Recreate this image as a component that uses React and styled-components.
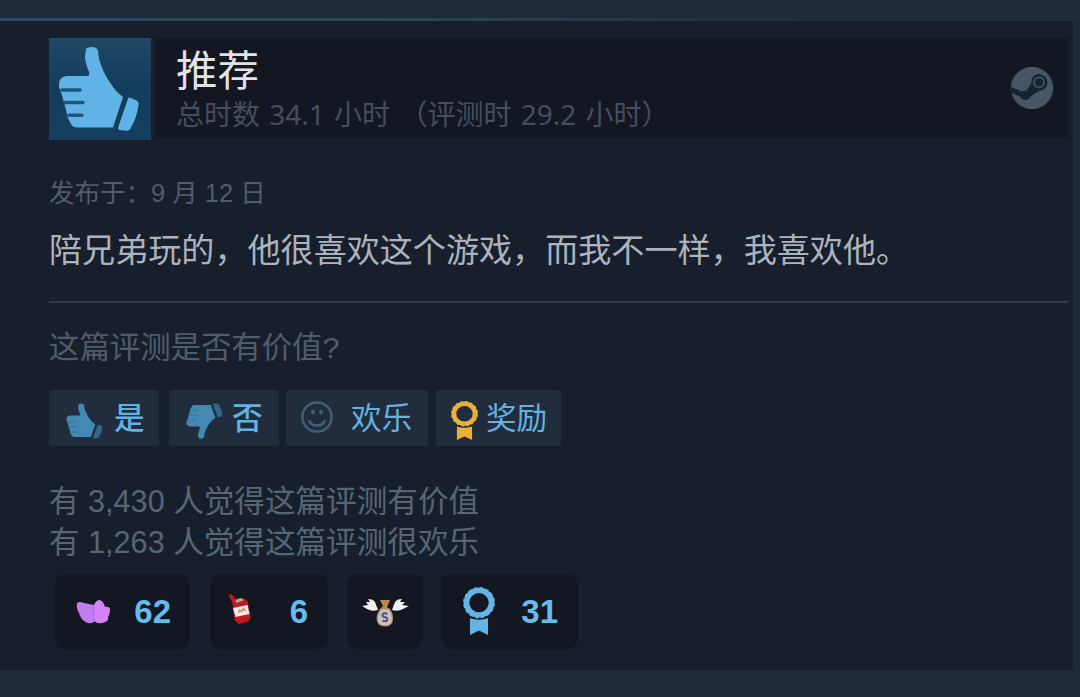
import React from 'react';
import styled, { createGlobalStyle } from 'styled-components';

const GlobalStyle = createGlobalStyle`
  * {
    box-sizing: border-box;
  }
  body {
    margin: 0;
    background: #1e2a39;
    font-family: "Liberation Sans", "Noto Sans CJK SC", sans-serif;
  }
`

const Page = styled.div`
  width: 1080px;
  height: 697px;
  padding-top: 18px;
  overflow: hidden;
  background: #1e2a39;
`

const TopLine = styled.div`
  height: 3px;
  background: linear-gradient(to right, #2b4a60, #2b475b 35%, #1e2d3c 75%);
`

const Card = styled.div`
  width: 1073px;
  height: 649px;
  padding: 17px 5px 0 49px;
  background: #171f2d;
`

const Header = styled.div`
  display: flex;
  height: 102px;
`

const ThumbBox = styled.div`
  width: 102px;
  height: 102px;
  background: linear-gradient(to bottom, #1f4964, #123c5c 50%, #153f5e);
`

const HeaderBar = styled.div`
  flex: 1;
  display: flex;
  align-items: center;
  justify-content: space-between;
  height: 100px;
  margin-left: 4px;
  padding: 0 14px 0 21px;
  background: #131722;
`

const Title = styled.div`
  height: 51px;
  margin-top: -2px;
  font-size: 41.5px;
  line-height: 60px;
  color: #e2e3e5;
`

const Hours = styled.div`
  height: 40px;
  font-family: "Noto Sans", "Noto Sans CJK SC", sans-serif;
  font-size: 28px;
  line-height: 42px;
  word-spacing: 2px;
  color: #464e5c;
  white-space: pre;
`

const Posted = styled.div`
  height: 36px;
  margin-top: 35px;
  font-size: 25.5px;
  line-height: 36px;
  color: #525c69;
`

const ReviewText = styled.div`
  height: 50px;
  margin-top: 15px;
  font-size: 33.1px;
  line-height: 50px;
  color: #acb3bc;
  white-space: nowrap;
`

const Divider = styled.div`
  height: 2px;
  margin-top: 25px;
  background: #2f3949;
`

const Question = styled.div`
  height: 44px;
  margin-top: 22px;
  font-size: 30.4px;
  line-height: 44px;
  color: #525c69;
`

const Buttons = styled.div`
  display: flex;
  height: 56px;
  margin-top: 21px;
`

const Button = styled.button`
  display: flex;
  align-items: center;
  gap: ${p => p.$gap}px;
  width: ${p => p.$width}px;
  height: 56px;
  margin: 0 ${p => p.$after || 0}px 0 0;
  padding: 0 0 0 ${p => p.$left}px;
  border: 0;
  border-radius: 3px;
  background: #212c3c;
  font-family: inherit;
  font-size: 30.6px;
  line-height: 56px;
  font-weight: ${p => p.$weight || 400};
  color: #62b3e2;
  white-space: nowrap;

  svg {
    flex: none;
    margin-top: ${p => p.$drop || 0}px;
  }
`

const Stats = styled.div`
  margin-top: 35px;
  font-size: 30.6px;
  line-height: 41px;
  color: #596573;
  white-space: nowrap;
`

const Awards = styled.div`
  display: flex;
  margin: 11px 0 0 6px;
`

const Award = styled.div`
  display: flex;
  align-items: center;
  justify-content: space-between;
  width: ${p => p.$width}px;
  height: 75px;
  margin-right: ${p => p.$after || 0}px;
  padding: 0 ${p => p.$right}px 0 ${p => p.$left}px;
  border-radius: 10px;
  background: #121722;
  font-size: 33px;
  font-weight: bold;
  color: #66bced;

  svg {
    margin-bottom: ${p => p.$lift || 0}px;
  }
`

function Thumb({ width, height, viewBox, color, cuff, slit, down }) {
  return (
    <svg width={width} height={height} viewBox={viewBox} preserveAspectRatio="none">
      <g transform={down ? 'translate(0 102) scale(1 -1)' : undefined}>
        <path
          fill={color}
          d="M37 11 Q38 9 43 9 Q48 9 49 13 Q49.500 21 52 27 Q56 38 62 46 Q66 53 74 59 L64 89.500 H28 Q24 89.500 22 86 Q18 80 17.500 74 L15.500 66 L12.500 56 L10 49 Q9 38 19 38 H38 Q41 38 40 34 Q36 24 36 19 Z"
        />
        <path
          fill={cuff}
          d="M79 60.500 Q80 59 82 60 L87.500 62.500 Q90 64 89.500 67 Q88 79 82 89.500 Q80.500 93 77 92.700 L70.500 92 Q68.500 91 69.500 88.500 Z"
        />
        <path stroke={slit} strokeWidth="3.500" strokeLinecap="round" d="M13 52 H31 M16 64.500 H34 M20 77.300 H33" />
      </g>
    </svg>
  )
}

function SteamLogo() {
  return (
    <svg width="44" height="44" viewBox="0 0 44 44">
      <circle cx="22" cy="22" r="21.200" fill="#465665" />
      <path fill="#172331" d="M0 20.500 L11.500 25.500 Q14 24.500 16.500 24.500 L21.500 17 Q21 9 29 8 Q37 9 37.500 16.500 Q37 24 29 25 L21 30 Q19 34 15 34 Q11 33.500 10 30.500 L1.500 27 Z" />
      <circle cx="29" cy="16.300" r="5" fill="none" stroke="#3e4e5c" strokeWidth="2" />
    </svg>
  )
}

function Smile() {
  return (
    <svg width="34" height="34" viewBox="0 0 34 34" fill="none" stroke="#416078" strokeWidth="2.500">
      <circle cx="17" cy="17" r="14.600" />
      <path d="M9.500 21 Q11 25.500 17 25.500 Q23 25.500 24.500 21" strokeLinecap="round" />
      <ellipse cx="13" cy="12" rx="1.900" ry="2.600" fill="#416078" stroke="none" />
      <ellipse cx="21" cy="12" rx="1.900" ry="2.600" fill="#416078" stroke="none" />
    </svg>
  )
}

function Ribbon({ width, height, color }) {
  return (
    <svg width={width} height={height} viewBox="0 0 32 49" preserveAspectRatio="none" fill="none">
      <circle cx="16" cy="16" r="12.500" stroke={color} strokeWidth="5.500" />
      <circle cx="16" cy="16" r="15.200" stroke={color} strokeWidth="1.400" strokeDasharray="3.970 2" />
      <path fill={color} d="M7 32 Q16 35 25 32 V49 L16 44.500 L7 49 Z" />
    </svg>
  )
}

function Wings() {
  return (
    <svg width="35" height="26" viewBox="0 0 35 26">
      <path fill="#bf7df0" d="M1 4 Q3 2 8 4 Q13 5 18 6 V23 Q13 26 8 22 Q5 20 3 14 Q0 9 1 4 Z" />
      <path fill="#d583fa" d="M18 6 Q20 1 24 1 Q28 3 29 8 Q34 7 34 11 Q34 15 32 18 Q33 22 29 23 Q23 26 18 22 Z" />
      <path stroke="#ad72dc" d="M18 7 V22" />
    </svg>
  )
}

function Bottle() {
  return (
    <svg width="27" height="32" viewBox="0 0 26 32">
      <path fill="#c21820" d="M1 2 L4 1 L8 6 L15 5 L20 8 L23 23 Q23 28 19 29 L11 31 L7 27 L5 10 Z" />
      <path fill="#f3e9e7" d="M5.500 15 L20 12 L22 21 L8 24 Z" />
      <path fill="#aba0a3" d="M8 7 L13 5 L17 7 L9 10 Z" />
      <path stroke="#d08680" strokeWidth="1.500" fill="none" d="M11 20 L12 17 L14 18.500 L16 15.500 L18 18" />
    </svg>
  )
}

function MoneyBag() {
  return (
    <svg width="48" height="30" viewBox="0 0 48 30">
      <path fill="#f1f0f1" d="M17 13 L14 5 Q12 2 7 2 L9 5 L5 5 L7 8 L1 9 L6 12 Q11 15 17 13 Z" />
      <path fill="#f1f0f1" d="M31 13 L34 5 Q36 2 41 2 L39 5 L44 5 L41 8 L48 9 L42 12 Q37 15 31 13 Z" />
      <path fill="#b88b48" d="M19 3 H29 L26 10 L30 13 H18 L22 9 Z" />
      <path fill="#cac3c5" stroke="#a78b69" strokeWidth="1.200" d="M20 12 H28 Q33 18 31 25 Q29 29 24 29 Q18 29 16.500 24 Q15 18 20 12 Z" />
      <path stroke="#5a5878" strokeWidth="2.200" fill="none" d="M26.500 17 Q22 15 21.500 18 Q21.500 20 24 20 Q27 21 26 23.500 Q24 25 21.500 23.500" />
    </svg>
  )
}

export default function App() {
  return (
    <Page>
      <GlobalStyle />
      <TopLine />
      <Card>
        <Header>
          <ThumbBox>
            <Thumb width="102" height="102" viewBox="0 0 102 102" color="#5fb3e7" cuff="#5fb3e7" slit="#1e567c" />
          </ThumbBox>
          <HeaderBar>
            <div>
              <Title>推荐</Title>
              <Hours>总时数 34.1 小时 （评测时 29.2 小时）</Hours>
            </div>
            <SteamLogo />
          </HeaderBar>
        </Header>

        <Posted>发布于：9 月 12 日</Posted>
        <ReviewText>陪兄弟玩的，他很喜欢这个游戏，而我不一样，我喜欢他。</ReviewText>
        <Divider />

        <Question>这篇评测是否有价值?</Question>
        <Buttons>
          <Button $width={110} $after={10} $left={17} $gap={11} $weight={500} $drop={6}>
            <Thumb width="37" height="36" viewBox="9 8 82 86" color="#4489b3" cuff="#34658a" slit="#3c799f" />
            是
          </Button>
          <Button $width={110} $after={7} $left={17} $gap={9} $weight={500} $drop={6}>
            <Thumb width="37" height="36" viewBox="9 8 82 86" color="#4489b3" cuff="#34658a" slit="#3c799f" down />
            否
          </Button>
          <Button $width={142} $after={8} $left={14} $gap={17} $drop={-3}>
            <Smile />
            欢乐
          </Button>
          <Button $width={125} $left={15} $gap={8} $drop={4}>
            <Ribbon width="27" height="39" color="#e9b13b" />
            奖励
          </Button>
        </Buttons>

        <Stats>
          <div>有 3,430 人觉得这篇评测有价值</div>
          <div>有 1,263 人觉得这篇评测很欢乐</div>
        </Stats>

        <Awards>
          <Award $width={135} $after={20} $left={21} $right={19}>
            <Wings />
            62
          </Award>
          <Award $width={118} $after={19} $left={17} $right={20} $lift={5}>
            <Bottle />
            6
          </Award>
          <Award $width={76} $after={18} $left={14} $right={14}>
            <MoneyBag />
          </Award>
          <Award $width={137} $left={22} $right={20} $lift={2}>
            <Ribbon width="32" height="48" color="#64b5e6" />
            31
          </Award>
        </Awards>
      </Card>
    </Page>
  )
}
